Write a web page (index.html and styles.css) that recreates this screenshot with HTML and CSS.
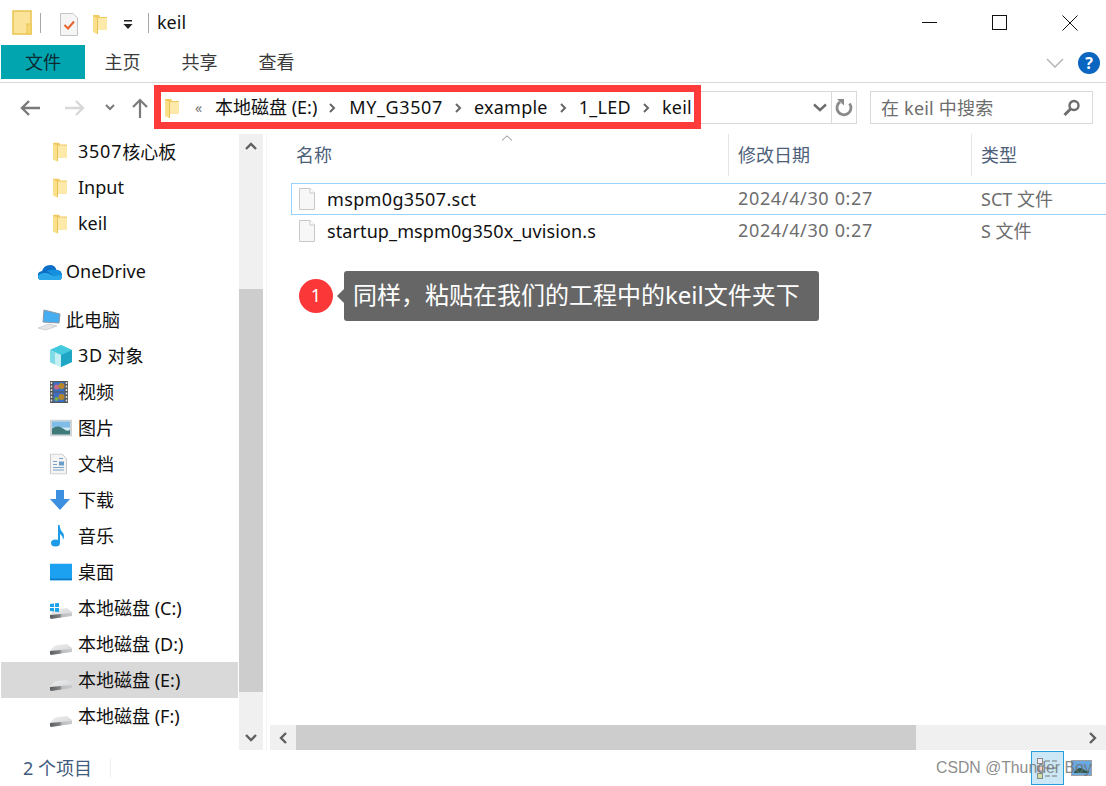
FILE: index.html
```html
<!DOCTYPE html>
<html lang="zh-CN">
<head>
<meta charset="utf-8">
<title>keil</title>
<link rel="stylesheet" href="styles.css">
</head>
<body>
<svg class="defs" width="0" height="0">
  <defs>
    <linearGradient id="driveFront" x1="0" x2="1" y1="0" y2="0">
      <stop offset="0" stop-color="#5a5d5f"/>
      <stop offset="0.45" stop-color="#808284"/>
      <stop offset="0.55" stop-color="#bcbec0"/>
      <stop offset="1" stop-color="#c8cacc"/>
    </linearGradient>
    <linearGradient id="driveTop" x1="0" x2="1" y1="0" y2="1">
      <stop offset="0" stop-color="#f0f0f0"/>
      <stop offset="1" stop-color="#d2d3d5"/>
    </linearGradient>
    <symbol id="folder" viewBox="0 0 14 19">
      <path d="M0 0 H6 L7 2 H14 V15 H0 Z" fill="#f0c95f"/>
      <path d="M5 3 H14 V15 H5 Z" fill="#fde9a9"/>
      <path d="M0 1 L4 3 V19 L0 17 Z" fill="#fbe08c"/>
      <path d="M4 3 H5 V19 H4 Z" fill="#e9c25a"/>
    </symbol>
    <symbol id="drive" viewBox="0 0 22 11">
      <path d="M5 1.500 L17 0 L22 4 V6 L0 8 V6.500 Z" fill="url(#driveTop)"/>
      <path d="M0 7 L22 5 V8 L1 11 L0 10 Z" fill="url(#driveFront)"/>
    </symbol>
    <symbol id="file" viewBox="0 0 16 22">
      <path d="M0.5 0.5 H11 L15.5 5 V21.5 H0.5 Z" fill="#f7f7f7" stroke="#c8c8c8"/>
      <path d="M11 0.5 V5 H15.5" fill="#fff" stroke="#c8c8c8"/>
    </symbol>
  </defs>
</svg>

<div class="window">
  <header class="titlebar">
    <svg class="qa-app" width="20" height="25" viewBox="0 0 20 25"><rect x="1" y="1" width="18" height="23" fill="#fbe49a" stroke="#e9c44f" stroke-width="1.5"/><rect x="15" y="14" width="4" height="10" fill="#f7d877" stroke="#e9c44f"/></svg>
    <span class="qa-sep"></span>
    <svg class="qa-doc" width="18" height="23" viewBox="0 0 18 23"><path d="M0.5 0.5 H13 L17.5 5 V22.5 H0.5 Z" fill="#f5f5f5" stroke="#c4c4c4"/><path d="M4.5 12 L8 15.5 L14 8.5" fill="none" stroke="#e8622d" stroke-width="2"/></svg>
    <svg class="qa-folder" width="14" height="19"><use href="#folder"/></svg>
    <svg class="qa-drop" width="10" height="11" viewBox="0 0 10 11"><rect x="1" y="0" width="8" height="1.5" fill="#222"/><path d="M0.5 4 H9.5 L5 9 Z" fill="#222"/></svg>
    <span class="qa-sep qa-sep-2"></span>
    <span class="title-text">keil</span>
    <div class="win-buttons">
      <svg width="16" height="16" viewBox="0 0 16 16"><path d="M0 7.500 H15" stroke="#111"/></svg>
      <svg width="16" height="16" viewBox="0 0 16 16"><rect x="0.500" y="0.500" width="14" height="14" fill="none" stroke="#111"/></svg>
      <svg width="16" height="16" viewBox="0 0 16 16"><path d="M0.5 0.5 L15.5 15.5 M15.5 0.5 L0.5 15.5" stroke="#111"/></svg>
    </div>
  </header>

  <nav class="ribbon">
    <span class="tab tab-file">文件</span>
    <span class="tab">主页</span>
    <span class="tab">共享</span>
    <span class="tab">查看</span>
    <svg class="ribbon-chevron" width="18" height="10" viewBox="0 0 18 10"><path d="M1 1 L9 9 L17 1" fill="none" stroke="#b5b5b5" stroke-width="1.5"/></svg>
    <span class="help">?</span>
  </nav>

  <div class="address-row">
    <svg class="nav-btn nav-back" width="20" height="16" viewBox="0 0 20 16"><path d="M9 1 L2 8 L9 15 M2 8 H20" fill="none" stroke="#7a7a7a" stroke-width="2.4"/></svg>
    <svg class="nav-btn nav-fwd" width="20" height="16" viewBox="0 0 20 16"><path d="M11 1 L18 8 L11 15 M18 8 H0" fill="none" stroke="#d8d8d8" stroke-width="2.4"/></svg>
    <svg class="nav-btn nav-down" width="10" height="7" viewBox="0 0 10 7"><path d="M1 1 L5 5 L9 1" fill="none" stroke="#7a7a7a" stroke-width="2"/></svg>
    <svg class="nav-btn nav-up" width="16" height="20" viewBox="0 0 16 20"><path d="M1 9 L8 2 L15 9 M8 2 V20" fill="none" stroke="#7a7a7a" stroke-width="2.2"/></svg>
    <div class="address-box">
      <svg class="crumb-folder" width="14" height="19"><use href="#folder"/></svg>
      <span class="crumb-more">«</span>
      <span class="crumb">本地磁盘 (E:)</span>
      <svg class="crumb-sep" width="7" height="10" viewBox="0 0 7 10"><path d="M1 1 L5 5 L1 9" fill="none" stroke="#666" stroke-width="2"/></svg>
      <span class="crumb crumb-digits">MY_G3507</span>
      <svg class="crumb-sep" width="7" height="10" viewBox="0 0 7 10"><path d="M1 1 L5 5 L1 9" fill="none" stroke="#666" stroke-width="2"/></svg>
      <span class="crumb crumb-wide">example</span>
      <svg class="crumb-sep" width="7" height="10" viewBox="0 0 7 10"><path d="M1 1 L5 5 L1 9" fill="none" stroke="#666" stroke-width="2"/></svg>
      <span class="crumb crumb-wide">1_LED</span>
      <svg class="crumb-sep" width="7" height="10" viewBox="0 0 7 10"><path d="M1 1 L5 5 L1 9" fill="none" stroke="#666" stroke-width="2"/></svg>
      <span class="crumb crumb-wide">keil</span>
      <svg class="addr-drop" width="14" height="9" viewBox="0 0 14 9"><path d="M1 1.5 L7 7 L13 1.5" fill="none" stroke="#6d6d6d" stroke-width="2.4"/></svg>
      <span class="addr-refresh">
        <svg width="18" height="18" viewBox="0 0 18 18"><path d="M14.5 4.5 A7 7 0 1 1 5 3" fill="none" stroke="#8a8a8a" stroke-width="2.8"/><path d="M2 0 L9 0 L9 6.500 Z" fill="#8a8a8a"/></svg>
      </span>
    </div>
    <div class="search-box">
      <span class="search-text">在 keil 中搜索</span>
      <svg width="18" height="18" viewBox="0 0 18 18"><circle cx="11" cy="6.5" r="4.5" fill="none" stroke="#6d6d6d" stroke-width="2.4"/><path d="M7.5 10 L1.5 16" stroke="#6d6d6d" stroke-width="3"/></svg>
    </div>
  </div>

  <div class="main">
    <aside class="nav-pane">
      <ul class="nav-list">
        <li class="nav-item sub"><svg class="nav-icon folder-icon" width="14" height="19"><use href="#folder"/></svg><span class="digits">3507</span>核心板</li>
        <li class="nav-item sub"><svg class="nav-icon folder-icon" width="14" height="19"><use href="#folder"/></svg>Input</li>
        <li class="nav-item sub group-end"><svg class="nav-icon folder-icon" width="14" height="19"><use href="#folder"/></svg>keil</li>
        <li class="nav-item top group-end">
          <svg class="nav-icon" width="25" height="16" viewBox="0 0 25 16"><path d="M1 12 Q0 8 5 7 Q7 1 13 1 Q18 1 19.500 6 Q25 6 25 12 Q25 16 22 16 H4 Q1 16 1 12 Z" fill="#0b6fc6"/><path d="M10 7 Q14 5 19.500 6 Q25 6 25 12 L17 12 Z" fill="#1490df"/><path d="M4 16 Q1 16 1 12 Q2 10 6 9 L10 9 L17 12 L25 11 Q25 16 22 16 Z" fill="#2aa8ea"/></svg>OneDrive
        </li>
        <li class="nav-item top">
          <svg class="nav-icon" width="24" height="22" viewBox="0 0 24 22"><path d="M7 1 L23 5 L22 14 L6 13 Z" fill="#44aef0" stroke="#8a98a6"/><path d="M1 19 L12 15 L20 17 L9 21 Z" fill="#e3e5e7" stroke="#bcc0c4" stroke-width="0.6"/></svg>此电脑
        </li>
        <li class="nav-item sub">
          <svg class="nav-icon" width="22" height="22" viewBox="0 0 22 22"><path d="M11 0 L22 5 V17 L11 22 L0 17 V5 Z" fill="#5fd0e0"/><path d="M11 0 L22 5 L11 10 L0 5 Z" fill="#45cadd"/><path d="M0 5 L11 10 V22 L0 17 Z" fill="#c6eff4"/><path d="M11 10 L22 5 V17 L11 22 Z" fill="#1ea6c4"/><path d="M0 5 L5 7.500 V19.500 L0 17 Z" fill="#7fdbe6"/></svg><span class="digits">3D</span>&nbsp;对象
        </li>
        <li class="nav-item sub">
          <svg class="nav-icon" width="18" height="22" viewBox="0 0 18 22"><rect width="18" height="22" fill="#555"/><path d="M1.500 1 V21 M16.500 1 V21" stroke="#ddd" stroke-width="1.500" stroke-dasharray="2 1.500"/><rect x="3.500" y="1" width="11" height="9.500" fill="#3a6fc4"/><rect x="3.500" y="11.500" width="11" height="9.500" fill="#3a6fc4"/><circle cx="6.500" cy="6" r="2.500" fill="#c96a8a"/><circle cx="11.500" cy="5" r="3" fill="#b8862a"/><circle cx="11.500" cy="16" r="3" fill="#b8862a"/><circle cx="6.500" cy="18" r="2" fill="#7cae44"/></svg>视频
        </li>
        <li class="nav-item sub">
          <svg class="nav-icon" width="22" height="17" viewBox="0 0 22 17"><rect x="1" y="1" width="20" height="15" fill="#cfe6f5" stroke="#d0d3d6" stroke-width="2"/><rect x="2" y="2" width="18" height="6" fill="#7fbce8"/><path d="M2 9 Q8 5 13 9 T20 10 V15 H2 Z" fill="#3f7a78"/></svg>图片
        </li>
        <li class="nav-item sub">
          <svg class="nav-icon" width="17" height="21" viewBox="0 0 17 21"><path d="M0.500 0.500 H12 L16.500 5 V20.500 H0.500 Z" fill="#f4f4f4" stroke="#c8c8c8"/><path d="M3 8 H7 M9 5 H13 M3 14 H14 M3 16.500 H14 M3 11 H7" stroke="#7aa2c8"/><rect x="9" y="8" width="5" height="4" fill="#6a9cc8"/></svg>文档
        </li>
        <li class="nav-item sub">
          <svg class="nav-icon" width="20" height="20" viewBox="0 0 20 20"><path d="M6 0 H14 V9 H20 L10 20 L0 9 H6 Z" fill="#3d8fe0"/></svg>下载
        </li>
        <li class="nav-item sub">
          <svg class="nav-icon" width="16" height="22" viewBox="0 0 16 22"><ellipse cx="5.500" cy="18" rx="4.500" ry="3.500" fill="#1e9be8"/><path d="M8 18 V0 H9.500 Q10 5 13 8 Q15 11 13 15 Q13 11 10 9 V18 Z" fill="#1e9be8"/></svg>音乐
        </li>
        <li class="nav-item sub">
          <svg class="nav-icon" width="22" height="17" viewBox="0 0 22 17"><rect width="22" height="17" fill="#1ba1f0"/><rect y="15" width="22" height="2" fill="#0d7cc8"/></svg>桌面
        </li>
        <li class="nav-item sub">
          <span class="drive-wrap">
            <svg class="drive-icon" width="22" height="11"><use href="#drive"/></svg>
            <svg class="drive-win" width="9" height="9" viewBox="0 0 9 9"><path d="M0 1 L4 0.500 V4 H0 Z M5 0.300 L9 0 V4 H5 Z M0 5 H4 V8.500 L0 8 Z M5 5 H9 V9 L5 8.700 Z" fill="#1aa3e8"/></svg>
          </span>本地磁盘 (C:)
        </li>
        <li class="nav-item sub"><span class="drive-wrap"><svg class="drive-icon" width="22" height="11"><use href="#drive"/></svg></span>本地磁盘 (D:)</li>
        <li class="nav-item sub selected"><span class="drive-wrap"><svg class="drive-icon" width="22" height="11"><use href="#drive"/></svg></span>本地磁盘 (E:)</li>
        <li class="nav-item sub"><span class="drive-wrap"><svg class="drive-icon" width="22" height="11"><use href="#drive"/></svg></span>本地磁盘 (F:)</li>
      </ul>
    </aside>

    <div class="vscroll">
      <span class="sb-btn"><svg width="12" height="8" viewBox="0 0 12 8"><path d="M1 7 L6 2 L11 7" fill="none" stroke="#606060" stroke-width="2.400"/></svg></span>
      <span class="v-gap-top"></span>
      <span class="v-thumb"></span>
      <span class="v-gap-bottom"></span>
      <span class="sb-btn"><svg width="12" height="8" viewBox="0 0 12 8"><path d="M1 1 L6 6 L11 1" fill="none" stroke="#606060" stroke-width="2.400"/></svg></span>
    </div>
    <span class="pane-divider"></span>

    <section class="content">
      <div class="col-header">
        <div class="col col-name">名称<svg class="sort-caret" width="12" height="6" viewBox="0 0 12 6"><path d="M1 5.500 L6 0.800 L11 5.500" fill="none" stroke="#8a8a8a"/></svg></div>
        <div class="col col-date">修改日期</div>
        <div class="col col-type">类型</div>
      </div>
      <div class="rows">
        <div class="row row-focus">
          <div class="cell-name"><svg width="16" height="22"><use href="#file"/></svg><span class="file-a">mspm0g3507.sct</span></div>
          <div class="cell-meta"><span class="date">2024/4/30 0:27</span></div>
          <div class="cell-meta">SCT 文件</div>
        </div>
        <div class="row">
          <div class="cell-name"><svg width="16" height="22"><use href="#file"/></svg><span class="file-b">startup_mspm0g350x_uvision.s</span></div>
          <div class="cell-meta"><span class="date">2024/4/30 0:27</span></div>
          <div class="cell-meta">S 文件</div>
        </div>
      </div>
      <div class="hscroll">
        <span class="sb-btn-h"><svg width="8" height="12" viewBox="0 0 8 12"><path d="M7 1 L2 6 L7 11" fill="none" stroke="#606060" stroke-width="2.400"/></svg></span>
        <span class="h-thumb"></span>
        <span class="h-gap"></span>
        <span class="sb-btn-h"><svg width="8" height="12" viewBox="0 0 8 12"><path d="M1 1 L6 6 L1 11" fill="none" stroke="#606060" stroke-width="2.400"/></svg></span>
      </div>
    </section>
  </div>

  <footer class="statusbar">
    <span class="status-text">2 个项目</span>
    <span class="status-sep"></span>
    <div class="view-btns">
      <span class="view-btn view-on">
        <svg width="22" height="23" viewBox="0 0 22 23"><rect x="0.500" y="1.500" width="5" height="5" fill="#eef" stroke="#888"/><rect x="0.500" y="9" width="5" height="5" fill="#f3d0c0" stroke="#888"/><rect x="0.500" y="16.500" width="5" height="5" fill="#cfe0a8" stroke="#888"/><path d="M8 4 H22 M8 11 H22 M8 19 H22" stroke="#777" stroke-dasharray="5 2"/></svg>
      </span>
      <svg class="view-large" width="21" height="16" viewBox="0 0 21 16"><rect x="0.500" y="0.500" width="20" height="15" fill="#6aa8e0" stroke="#a0a0a0"/><path d="M3 12 Q8 6 12 9 T18 11 V13 H3 Z" fill="#2f5a50"/></svg>
    </div>
  </footer>

  <div class="red-box"></div>
  <div class="callout">
    <span class="marker">1</span>
    <span class="tip">同样，粘贴在我们的工程中的keil文件夹下</span>
  </div>
  <div class="watermark">CSDN @Thunder Boy</div>
</div>
</body>
</html>
```

FILE: styles.css
```css
* { box-sizing: border-box; }
html, body { margin: 0; padding: 0; background: #fff; }
body {
  width: 1106px;
  height: 786px;
  overflow: hidden;
  font-family: "Noto Sans", "Noto Sans CJK SC", sans-serif;
  font-size: 18px;
  color: #111;
}
.defs { display: block; height: 0; }
svg { display: block; flex: none; }
ul { list-style: none; margin: 0; padding: 0; }

.window {
  position: relative;
  width: 1106px;
  height: 786px;
  display: flex;
  flex-direction: column;
}

/* title bar */
.titlebar {
  height: 45px;
  display: flex;
  align-items: center;
  padding-left: 12px;
  flex: none;
}
.qa-sep { width: 1px; height: 20px; background: #a8a8a8; margin-left: 8px; }
.qa-doc { margin-left: 19px; margin-top: 3px; }
.qa-folder { margin-left: 15px; margin-top: 4px; }
.qa-drop { margin-left: 16px; margin-top: 5px; }
.qa-sep-2 { margin-left: 15px; }
.title-text { margin-left: 8px; line-height: 24px; margin-top: -2px; }
.win-buttons { margin-left: auto; display: flex; gap: 54px; padding-right: 28px; }

/* ribbon */
.ribbon {
  height: 38px;
  flex: none;
  display: flex;
  align-items: flex-start;
  padding-left: 1px;
  border-bottom: 1px solid #dadada;
}
.tab {
  width: 77px;
  height: 34px;
  line-height: 35px;
  text-align: center;
  padding-right: 2px;
  color: #3a3a3a;
}
.tab-file { width: 84px; padding-right: 0; background: #00a5b0; color: #0c2a30; }
.ribbon-chevron { margin-left: auto; margin-top: 13px; }
.help {
  width: 22px;
  height: 22px;
  border-radius: 50%;
  background: #0a66c0;
  color: #fff;
  font-size: 16px;
  font-weight: 700;
  line-height: 22px;
  text-align: center;
  margin: 7px 6px 0 14px;
}

/* address row */
.address-row {
  height: 51px;
  flex: none;
  display: flex;
  align-items: center;
  padding-bottom: 2px;
}
.nav-back { margin-left: 20px; }
.nav-fwd { margin-left: 25px; }
.nav-down { margin-left: 20px; }
.nav-up { margin-left: 17px; }
.address-box {
  margin-left: 10px;
  width: 699px;
  height: 33px;
  border: 1px solid #d9d9d9;
  display: flex;
  align-items: center;
  padding-left: 6px;
}
.crumb-folder { margin-top: 1px; }
.crumb-more { color: #777; font-size: 14px; margin: 0 0 0 16px; width: 20px; line-height: 16px; }
.crumb { white-space: nowrap; line-height: 24px; margin-top: -1px; }
.crumb-digits { letter-spacing: 0.6px; margin-left: 1px; }
.crumb-wide { letter-spacing: 0.25px; }
.crumb-sep { margin: 1px 12px 0; }
.addr-drop { margin-left: auto; margin-right: 4px; }
.addr-refresh {
  width: 25px;
  height: 31px;
  border-left: 1px solid #d9d9d9;
  display: flex;
  align-items: center;
  justify-content: center;
}
.search-box {
  margin-left: 13px;
  width: 223px;
  height: 33px;
  border: 1px solid #d9d9d9;
  display: flex;
  align-items: center;
  justify-content: space-between;
  padding: 0 11px 0 10px;
}
.search-text { color: #6d6d6d; line-height: 24px; letter-spacing: 0.2px; }

/* main */
.main { flex: 1; min-height: 0; display: flex; }
.nav-pane { width: 239px; padding: 0 0 0 1px; flex: none; }
.nav-item {
  height: 36px;
  display: flex;
  align-items: center;
  white-space: nowrap;
  width: 237px;
  padding-bottom: 2px;
  position: relative;
}
.sub { padding-left: 77px; }
.top { padding-left: 65px; }
.group-end { margin-bottom: 12px; }
.digits { letter-spacing: 0.75px; }
.nav-icon { position: absolute; top: 50%; transform: translateY(-50%); left: 49px; }
.folder-icon { left: 52px; }
.top .nav-icon { left: 36px; }
.selected { background: #d9d9d9; }
.drive-wrap { position: absolute; left: 49px; top: 0; width: 24px; height: 36px; }
.drive-icon { position: absolute; left: 0; top: 18px; }
.drive-win { position: absolute; left: 0; top: 13px; }

.vscroll {
  width: 24px;
  flex: none;
  height: 616px;
  background: #f0f0f0;
  display: flex;
  flex-direction: column;
}
.sb-btn {
  height: 24px;
  flex: none;
  display: flex;
  align-items: center;
  justify-content: center;
}
.v-gap-top { height: 131px; flex: none; }
.v-thumb { height: 403px; flex: none; background: #cdcdcd; }
.v-gap-bottom { flex: 1; }
.pane-divider { width: 1px; height: 616px; flex: none; margin: 0 3px; background: #f4f4f4; }

.content {
  flex: 1;
  min-width: 0;
  display: flex;
  flex-direction: column;
}
.col-header {
  height: 40px;
  flex: none;
  display: grid;
  grid-template-columns: 458px 243px 1fr;
  color: #4c607a;
}
.col { line-height: 42px; padding-left: 9px; position: relative; border-left: 1px solid #e5e5e5; }
.col-name { border-left: none; padding-left: 26px; }
.sort-caret { position: absolute; left: 231px; top: 1px; }
.rows { margin: 9px 0 0 21px; flex: 1; }
.row {
  height: 32px;
  display: grid;
  grid-template-columns: 437px 243px 1fr;
  align-items: center;
  border: 1px solid transparent;
  border-right: none;
}
.row-focus { border-color: #99d1ff; }
.cell-name { display: flex; align-items: center; gap: 12px; padding-left: 7px; white-space: nowrap; }
.file-a { letter-spacing: 0.35px; }
.file-b { letter-spacing: 0.1px; }
.cell-meta { color: #6d6d6d; padding: 0 0 2px 9px; white-space: nowrap; }
.date { letter-spacing: 0.65px; }

.hscroll {
  height: 25px;
  flex: none;
  background: #f0f0f0;
  display: flex;
}
.sb-btn-h {
  width: 26px;
  flex: none;
  display: flex;
  align-items: center;
  justify-content: center;
}
.h-thumb { width: 620px; flex: none; background: #cdcdcd; }
.h-gap { flex: 1; }

/* status */
.statusbar {
  height: 36px;
  flex: none;
  display: flex;
  align-items: center;
  padding-left: 23px;
  color: #3f5a7c;
}
.status-text { margin-top: -3px; }
.status-sep { width: 1px; height: 18px; background: #eee; margin-left: 18px; }
.view-btns { margin-left: auto; display: flex; align-items: center; gap: 7px; padding-right: 14px; }
.view-btn {
  width: 33px;
  height: 34px;
  display: flex;
  align-items: center;
  justify-content: center;
}
.view-on { background: #cce8f6; border: 1px solid #26a0da; }

/* overlays */
.red-box {
  position: absolute;
  left: 154px;
  top: 85px;
  width: 547px;
  height: 44px;
  border: 7px solid #fe3a3a;
}
.callout {
  position: absolute;
  left: 299px;
  top: 271px;
  display: flex;
  align-items: center;
}
.marker {
  width: 34px;
  height: 34px;
  border-radius: 50%;
  background: #fb3737;
  color: #fff;
  font-size: 18px;
  line-height: 32px;
  text-align: center;
  flex: none;
}
.tip {
  position: relative;
  margin-left: 11px;
  height: 50px;
  width: 475px;
  padding-left: 9px;
  border-radius: 3px;
  background: #666;
  color: #fff;
  font-size: 24px;
  line-height: 48px;
  white-space: nowrap;
}
.tip::before {
  content: "";
  position: absolute;
  left: -7px;
  top: 18px;
  border-style: solid;
  border-width: 7px 7px 7px 0;
  border-color: transparent #666 transparent transparent;
}
.watermark {
  position: absolute;
  left: 936px;
  top: 758px;
  font-family: "Liberation Sans", sans-serif;
  font-size: 15.800px;
  line-height: 20px;
  color: rgba(110, 110, 110, 0.8);
  white-space: nowrap;
}
```
